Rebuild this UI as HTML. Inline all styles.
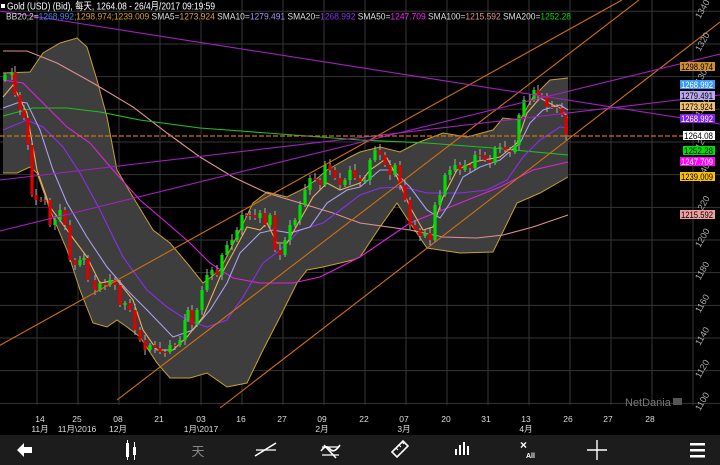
<!DOCTYPE html>
<html><head><meta charset="utf-8"><style>
html,body{margin:0;padding:0;background:#000;width:720px;height:465px;overflow:hidden}
svg{display:block}
text{font-family:"Liberation Sans","Noto Sans CJK SC",sans-serif}
</style></head><body>
<svg id="s" width="720" height="465" viewBox="0 0 720 465" xmlns="http://www.w3.org/2000/svg">
<g id="grid" stroke="#363636" stroke-width="1"></g>
<g id="band"></g>
<g id="lines" fill="none"></g>
<g id="candles"></g>
<g id="tl" fill="none" stroke-width="1.1"></g>
<line x1="0" y1="136" x2="683" y2="136" stroke="#d07010" stroke-width="1.2" stroke-dasharray="5,2"/>
<g id="axl" fill="#aaa" font-size="9"></g>
<g id="labels" font-size="9"></g>
<text x="625" y="406" fill="#777" font-size="11">NetDania</text>
<rect x="673" y="398" width="9" height="7" fill="#555"/>
<g fill="#ddd" font-size="8.5" text-anchor="middle">
<text x="40" y="422">14</text><text x="77" y="422">25</text><text x="118" y="422">08</text><text x="159" y="422">21</text><text x="201" y="422">03</text><text x="241" y="422">16</text><text x="282" y="422">27</text><text x="322" y="422">09</text><text x="364" y="422">22</text><text x="404" y="422">07</text><text x="446" y="422">20</text><text x="486" y="422">31</text><text x="526" y="422">13</text><text x="568" y="422">26</text><text x="608" y="422">27</text><text x="650" y="422">28</text>
<text x="40" y="432">11月</text><text x="77" y="432">11月\2016</text><text x="118" y="432">12月</text><text x="201" y="432">1月\2017</text><text x="322" y="432">2月</text><text x="404" y="432">3月</text><text x="526" y="432">4月</text>
</g>
<rect x="0" y="435" width="720" height="30" fill="#1c1c1c"/>
<g fill="#fff" stroke="none">
<path d="M17 450 L24 443 L24 447 L32 447 L32 453 L24 453 L24 457 Z"/>
<rect x="126" y="443" width="3" height="14"/><rect x="127" y="440" width="1" height="20"/>
<rect x="133" y="447" width="3" height="8"/><rect x="134" y="442" width="1" height="18"/>
<text x="198" y="456" fill="#888" font-size="13" text-anchor="middle">天</text>
<rect x="455" y="449" width="2" height="6"/><rect x="459" y="445" width="2" height="10"/><rect x="463" y="442" width="2" height="13"/><rect x="467" y="446" width="2" height="9"/>
<text x="520" y="449" font-size="12" font-weight="bold">×</text><text x="526" y="458" font-size="7" font-weight="bold">All</text>
<rect x="690" y="443" width="15" height="2.5"/><rect x="690" y="449" width="15" height="2.5"/><rect x="690" y="455" width="15" height="2.5"/>
</g>
<g stroke="#fff" stroke-width="1.6" fill="none">
<path d="M255 456 L276 443"/><path d="M256 450 L276 450" stroke-width="1.2"/>
<path d="M321 451 Q326 444 330 449 T340 445"/><path d="M322 447 L339 447 M322 455 L339 455" stroke-width="1.2"/><path d="M324 445 L336 458"/>
<path d="M392 452 L403 441 L408 446 L397 457 Z"/><path d="M396 448 L398 450 M399 445 L401 447 M402 442 L404 444" stroke-width="1"/>
<path d="M587 450 L607 450 M597 440 L597 460" stroke-width="1.4"/>
</g>
<g font-size="10" fill="#fff">
<rect x="1" y="4" width="4" height="4" fill="#fff"/>
<text x="7" y="9.5" textLength="208" lengthAdjust="spacingAndGlyphs">Gold (USD) (Bid), 每天, 1264.08 - 26/4月/2017 09:19:59</text>
</g>
<text y="19.5" font-size="9.5" fill="#ddd" textLength="565" lengthAdjust="spacingAndGlyphs" x="6">BB20,2=<tspan fill="#3a8ef0">1268.992</tspan><tspan fill="#d4a020">;1298.974;1239.009</tspan> SMA5=<tspan fill="#e0a040">1273.924</tspan> SMA10=<tspan fill="#a090f0">1279.491</tspan> SMA20=<tspan fill="#8a2ef0">1268.992</tspan> SMA50=<tspan fill="#ff20ff">1247.709</tspan> SMA100=<tspan fill="#e09090">1215.592</tspan> SMA200=<tspan fill="#00dd00">1252.28</tspan></text>
</svg>
<script>
var NS="http://www.w3.org/2000/svg";
function el(p,t,a){var e=document.createElementNS(NS,t);for(var k in a)e.setAttribute(k,a[k]);p.appendChild(e);return e;}
var $=function(i){return document.getElementById(i)};
var g=$("grid");
for(var i=0;i<13;i++){var y=11.3+i*32.67;el(g,"line",{x1:0,x2:720,y1:y,y2:y});}
for(var i=0;i<17;i++){var x=37+i*41;el(g,"line",{x1:x,x2:x,y1:0,y2:405});}
function pts(a){return a.map(function(p){return p[0]+","+p[1]}).join(" ");}
var up=[[3,73],[30,72],[43,53],[60,43],[77,38],[87,47],[97,80],[107,117],[117,170],[133,197],[153,230],[170,243],[187,263],[203,283],[220,270],[240,230],[253,203],[267,192],[287,197],[307,187],[327,170],[350,157],[360,152],[380,147],[400,152],[417,143],[443,133],[467,137],[493,130],[503,118],[520,120],[533,97],[550,80],[568,78]];
var lo=[[3,173],[17,173],[30,167],[37,173],[50,210],[67,250],[80,290],[93,323],[107,327],[117,320],[127,327],[140,337],[157,363],[170,378],[190,378],[207,373],[227,387],[247,383],[263,350],[280,317],[297,283],[307,270],[323,267],[353,260],[360,257],[380,227],[397,203],[410,223],[427,248],[460,253],[493,252],[517,203],[540,193],[568,177]];
var b=$("band");
el(b,"polygon",{points:pts(up.concat(lo.slice().reverse())),fill:"#3e3e3e"});
el(b,"polyline",{points:pts(up),fill:"none",stroke:"#c8a030","stroke-width":1});
el(b,"polyline",{points:pts(lo),fill:"none",stroke:"#c8a030","stroke-width":1});
var L=$("lines");
var lines=[
["#e09090",[[3,51],[27,51],[57,63],[93,83],[133,107],[167,133],[200,157],[233,177],[267,193],[300,203],[333,213],[360,223],[410,230],[443,237],[477,238],[503,235],[533,227],[568,215]]],
["#20c020",[[3,116],[33,108],[67,108],[100,112],[140,120],[200,128],[267,133],[333,138],[360,140],[427,143],[493,148],[568,155]]],
["#e020e0",[[3,80],[23,83],[43,103],[67,127],[90,143],[113,170],[140,200],[167,223],[190,243],[210,263],[233,278],[260,283],[293,283],[320,277],[360,257],[410,223],[460,203],[500,187],[533,170],[568,162]]],
["#8a2ef0",[[3,130],[27,120],[43,127],[63,147],[80,173],[100,210],[123,257],[147,290],[167,307],[187,320],[207,327],[227,320],[243,297],[263,263],[280,250],[300,230],[323,223],[347,205],[360,195],[380,188],[403,187],[427,193],[460,193],[487,190],[507,180],[523,157],[540,140],[560,127],[568,128]]],
["#a8a0f0",[[3,108],[20,102],[27,103],[40,130],[53,170],[67,203],[87,237],[107,267],[127,290],[147,310],[173,337],[193,330],[210,310],[227,283],[240,253],[260,233],[273,230],[290,233],[310,227],[327,203],[347,190],[360,187],[380,170],[393,170],[410,187],[427,210],[440,218],[450,203],[463,177],[480,167],[500,160],[520,143],[530,123],[543,110],[560,105],[568,110]]],
["#e8b060",[[3,97],[13,85],[27,113],[37,170],[50,207],[67,230],[87,257],[100,283],[117,280],[133,300],[143,330],[157,350],[173,350],[187,337],[203,317],[220,277],[233,253],[247,227],[260,230],[267,223],[277,243],[287,243],[300,220],[313,197],[327,183],[340,190],[360,183],[370,170],[387,158],[397,177],[410,207],[423,230],[433,227],[443,197],[457,170],[473,162],[500,157],[517,143],[527,113],[540,98],[553,105],[560,108],[568,118]]]
];
lines.forEach(function(l){el(L,"polyline",{points:pts(l[1]),stroke:l[0],"stroke-width":1.1});});
var cp=[[5,75],[12,72],[15,95],[20,110],[24,118],[28,145],[32,195],[36,200],[41,200],[45,200],[50,225],[55,220],[60,210],[65,225],[70,260],[75,265],[80,260],[84,258],[88,280],[95,290],[100,283],[105,285],[110,280],[115,285],[120,305],[125,303],[130,310],[135,330],[140,340],[145,350],[150,345],[155,348],[160,352],[165,352],[170,345],[175,345],[180,340],[185,320],[188,310],[192,325],[197,310],[202,290],[207,275],[212,270],[217,275],[222,255],[227,245],[232,240],[237,230],[242,215],[246,215],[250,215],[255,218],[260,213],[265,225],[270,215],[275,250],[280,255],[285,240],[290,225],[295,220],[300,205],[305,190],[310,178],[315,180],[320,185],[325,165],[330,170],[335,178],[340,185],[345,180],[350,170],[355,178],[360,182],[365,180],[370,160],[375,150],[380,155],[385,165],[390,175],[395,165],[400,185],[405,200],[410,225],[415,230],[420,236],[425,233],[430,240],[435,205],[440,195],[445,175],[450,170],[455,165],[460,170],[465,165],[470,168],[475,155],[480,155],[485,160],[490,163],[495,148],[500,147],[505,150],[510,152],[515,145],[519,115],[524,100],[530,100],[534,90],[538,95],[542,97],[547,107],[552,107],[557,108],[562,115],[566,135]];
var C=$("candles");var prev=cp[0][1]+5;
cp.forEach(function(p,i){var o=prev,c=p[1];var hi=Math.min(o,c)-2-(i*7%5),lw=Math.max(o,c)+2+(i*3%6);
el(C,"line",{x1:p[0],x2:p[0],y1:hi,y2:lw,stroke:"#aaa","stroke-width":1});
var col=c<o?"#00e000":"#e00000";var t=Math.min(o,c),h=Math.max(1,Math.abs(o-c));
el(C,"rect",{x:p[0]-1.6,y:t,width:3.2,height:h,fill:col});prev=c;});
var T=$("tl");
[["#d07010",[-5,348],[622,0]],["#d07010",[117,400],[639,0]],["#d07010",[220,408],[720,22]],
["#a020c0",[0,11],[720,124]],["#a020c0",[0,180],[720,95]],["#a020c0",[0,231],[720,54]]].forEach(function(l){
el(T,"line",{x1:l[1][0],y1:l[1][1],x2:l[2][0],y2:l[2][1],stroke:l[0]});});
var A=$("axl");
for(var i=0;i<13;i++){var y=11.3+i*32.67,v=1340-i*20;var t=el(A,"text",{x:0,y:0,transform:"translate(700,"+(y+8)+") rotate(-60)"});t.textContent=v;}
var Lb=$("labels");
[["1298.974",62,"#d09030","#000",680],["1268.992",80,"#3399ff","#fff",680],["1279.491",91,"#b8a8f0","#000",680],["1273.924",102,"#f0c070","#000",680],["1268.992",114,"#8020f0","#fff",680],["1264.08",131,"#fff","#000",683],["1252.28",146,"#00e000","#000",683],["1247.709",157,"#ff00ff","#fff",680],["1239.009",172,"#ffc000","#000",680],["1215.592",210,"#f0a0a0","#000",680]].forEach(function(l){
el(Lb,"rect",{x:l[4],y:l[1],width:715-l[4],height:9,fill:l[2]});var t=el(Lb,"text",{x:l[4]+1,y:l[1]+8,fill:l[3],textLength:713-l[4]-1,lengthAdjust:"spacingAndGlyphs"});t.textContent=l[0];});
</script>
</body></html>
